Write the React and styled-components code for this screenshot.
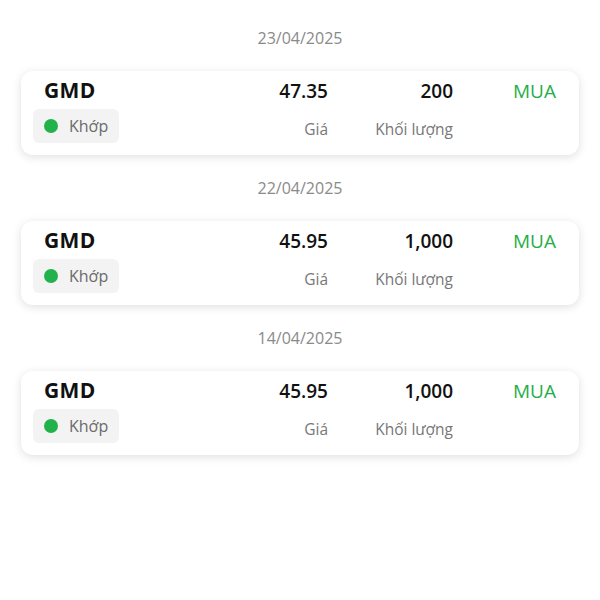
import React from "react";
import styled, { createGlobalStyle } from "styled-components";

const GlobalStyle = createGlobalStyle`
  body {
    margin: 0;
    background: #ffffff;
    font-family: "Open Sans", "Noto Sans", sans-serif;
  }
`;

const Page = styled.div`
  width: 600px;
  padding: 20px 21px 0 21px;
  box-sizing: border-box;
`;

const Group = styled.section`
  display: flex;
  flex-direction: column;
  margin-bottom: 15px;
`;

const DateLabel = styled.div`
  text-align: center;
  font-size: 16px;
  line-height: 36px;
  color: #8a8a8a;
  margin-bottom: 15px;
`;

const Card = styled.div`
  display: grid;
  grid-template-columns: 1fr 120px 125px 103px;
  grid-template-rows: auto auto;
  row-gap: 5px;
  align-items: baseline;
  padding: 5px 23px 12px 23px;
  border-radius: 12px;
  background: #fff;
  box-shadow: 0 2px 10px rgba(0, 0, 0, 0.13);
`;

const Symbol = styled.div`
  font-size: 21px;
  font-weight: 700;
  line-height: 28px;
  color: #111;
  letter-spacing: 0.4px;
`;

const Value = styled.div`
  text-align: right;
  font-size: 19px;
  font-weight: 600;
  color: #111;
`;

const Side = styled.div`
  text-align: right;
  font-size: 19px;
  color: ${(p) => (p.$buy ? "#1fae48" : "#e0433a")};
`;

const Badge = styled.div`
  justify-self: start;
  align-self: center;
  display: flex;
  align-items: center;
  gap: 11px;
  margin-left: -11px;
  height: 34px;
  padding: 0 11px;
  border-radius: 6px;
  background: #f3f3f3;
  font-size: 16px;
  color: #6a6a6a;
`;

const Dot = styled.span`
  width: 14px;
  height: 14px;
  border-radius: 50%;
  background: ${(p) => p.$color};
`;

const Caption = styled.div`
  text-align: right;
  align-self: center;
  font-size: 15.5px;
  color: #777;
  margin-top: 5px;
`;

const orders = [
  { date: "23/04/2025", symbol: "GMD", price: "47.35", qty: "200", side: "MUA" },
  { date: "22/04/2025", symbol: "GMD", price: "45.95", qty: "1,000", side: "MUA" },
  { date: "14/04/2025", symbol: "GMD", price: "45.95", qty: "1,000", side: "MUA" },
];

export default function App() {
  return (
    <>
      <GlobalStyle />
      <Page>
        {orders.map((o, i) => (
          <Group key={i}>
            <DateLabel>{o.date}</DateLabel>
            <Card>
              <Symbol>{o.symbol}</Symbol>
              <Value>{o.price}</Value>
              <Value>{o.qty}</Value>
              <Side $buy={o.side === "MUA"}>{o.side}</Side>
              <Badge>
                <Dot $color="#22b24c" />
                Khớp
              </Badge>
              <Caption>Giá</Caption>
              <Caption>Khối lượng</Caption>
              <div />
            </Card>
          </Group>
        ))}
      </Page>
    </>
  );
}
